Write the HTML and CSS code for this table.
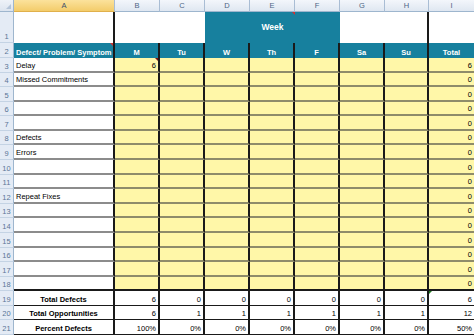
FILE: index.html
```html
<!DOCTYPE html>
<html>
<head>
<meta charset="utf-8">
<link rel="stylesheet" href="styles.css">
</head>
<body>
<div class="sheet">
  <div class="corner"><span class="tri"></span></div>
  <div class="ch sel">A</div><div class="ch">B</div><div class="ch">C</div><div class="ch">D</div><div class="ch">E</div><div class="ch">F</div><div class="ch">G</div><div class="ch">H</div><div class="ch last">I</div>

  <div class="rh">1</div>
  <div class="c w1 bk"></div>
  <div class="c w1 span2"></div>
  <div class="c week span3">Week<span class="mark red mk-e"></span></div>
  <div class="c w1 span2 bk"></div>
  <div class="c w1 end"></div>

  <div class="rh">2</div>
  <div class="c hd left">Defect/ Problem/ Symptom<span class="mark red mk-tr"></span></div>
  <div class="c hd">M</div><div class="c hd">Tu</div><div class="c hd">W</div><div class="c hd">Th</div><div class="c hd">F</div><div class="c hd">Sa</div><div class="c hd">Su</div><div class="c hd end">Total</div>

  <div class="rh">3</div><div class="c lab">Delay</div><div class="c y num">6<span class="mark dred mk-tr"></span></div><div class="c y"></div><div class="c y"></div><div class="c y"></div><div class="c y"></div><div class="c y"></div><div class="c y"></div><div class="c y num end">6</div>
  <div class="rh">4</div><div class="c lab">Missed Commitments</div><div class="c y"></div><div class="c y"></div><div class="c y"></div><div class="c y"></div><div class="c y"></div><div class="c y"></div><div class="c y"></div><div class="c y num end">0</div>
  <div class="rh">5</div><div class="c lab"></div><div class="c y"></div><div class="c y"></div><div class="c y"></div><div class="c y"></div><div class="c y"></div><div class="c y"></div><div class="c y"></div><div class="c y num end">0</div>
  <div class="rh">6</div><div class="c lab"></div><div class="c y"></div><div class="c y"></div><div class="c y"></div><div class="c y"></div><div class="c y"></div><div class="c y"></div><div class="c y"></div><div class="c y num end">0</div>
  <div class="rh">7</div><div class="c lab"></div><div class="c y"></div><div class="c y"></div><div class="c y"></div><div class="c y"></div><div class="c y"></div><div class="c y"></div><div class="c y"></div><div class="c y num end">0</div>
  <div class="rh">8</div><div class="c lab">Defects</div><div class="c y"></div><div class="c y"></div><div class="c y"></div><div class="c y"></div><div class="c y"></div><div class="c y"></div><div class="c y"></div><div class="c y num end">0</div>
  <div class="rh">9</div><div class="c lab">Errors</div><div class="c y"></div><div class="c y"></div><div class="c y"></div><div class="c y"></div><div class="c y"></div><div class="c y"></div><div class="c y"></div><div class="c y num end">0</div>
  <div class="rh">10</div><div class="c lab"></div><div class="c y"></div><div class="c y"></div><div class="c y"></div><div class="c y"></div><div class="c y"></div><div class="c y"></div><div class="c y"></div><div class="c y num end">0</div>
  <div class="rh">11</div><div class="c lab"></div><div class="c y"></div><div class="c y"></div><div class="c y"></div><div class="c y"></div><div class="c y"></div><div class="c y"></div><div class="c y"></div><div class="c y num end">0</div>
  <div class="rh">12</div><div class="c lab">Repeat Fixes</div><div class="c y"></div><div class="c y"></div><div class="c y"></div><div class="c y"></div><div class="c y"></div><div class="c y"></div><div class="c y"></div><div class="c y num end">0</div>
  <div class="rh">13</div><div class="c lab"></div><div class="c y"></div><div class="c y"></div><div class="c y"></div><div class="c y"></div><div class="c y"></div><div class="c y"></div><div class="c y"></div><div class="c y num end">0</div>
  <div class="rh">14</div><div class="c lab"></div><div class="c y"></div><div class="c y"></div><div class="c y"></div><div class="c y"></div><div class="c y"></div><div class="c y"></div><div class="c y"></div><div class="c y num end">0</div>
  <div class="rh">15</div><div class="c lab"></div><div class="c y"></div><div class="c y"></div><div class="c y"></div><div class="c y"></div><div class="c y"></div><div class="c y"></div><div class="c y"></div><div class="c y num end">0</div>
  <div class="rh">16</div><div class="c lab"></div><div class="c y"></div><div class="c y"></div><div class="c y"></div><div class="c y"></div><div class="c y"></div><div class="c y"></div><div class="c y"></div><div class="c y num end">0</div>
  <div class="rh">17</div><div class="c lab"></div><div class="c y"></div><div class="c y"></div><div class="c y"></div><div class="c y"></div><div class="c y"></div><div class="c y"></div><div class="c y"></div><div class="c y num end">0</div>
  <div class="rh">18</div><div class="c lab lastlab"></div><div class="c y lasty"></div><div class="c y lasty"></div><div class="c y lasty"></div><div class="c y lasty"></div><div class="c y lasty"></div><div class="c y lasty"></div><div class="c y lasty"></div><div class="c y num end lasty">0</div>

  <div class="rh">19</div><div class="c ft">Total Defects</div><div class="c f num">6</div><div class="c f num">0</div><div class="c f num">0</div><div class="c f num">0</div><div class="c f num">0</div><div class="c f num">0</div><div class="c f num">0</div><div class="c f num end">6<span class="mark green mk-tl"></span></div>
  <div class="rh">20</div><div class="c ft">Total Opportunities</div><div class="c f num">6</div><div class="c f num">1</div><div class="c f num">1</div><div class="c f num">1</div><div class="c f num">1</div><div class="c f num">1</div><div class="c f num">1</div><div class="c f num end">12</div>
  <div class="rh">21</div><div class="c ft">Percent Defects</div><div class="c f num">100%</div><div class="c f num">0%</div><div class="c f num">0%</div><div class="c f num">0%</div><div class="c f num">0%</div><div class="c f num">0%</div><div class="c f num">0%</div><div class="c f num end">50%</div>
</div>
</body>
</html>
```

FILE: styles.css
```css
html, body {
  margin: 0;
  padding: 0;
  background: #ffffff;
}

.sheet {
  display: grid;
  grid-template-columns: 14px 101px 45px 45px 45px 45px 45px 45px 44px 45px;
  grid-template-rows: 12px 31px 15px repeat(19, 1fr);
  width: 474px;
  height: 335px;
  overflow: hidden;
  font-family: "Liberation Sans", Arial, sans-serif;
  font-size: 7.5px;
  color: #000;
}

.sheet > div {
  box-sizing: border-box;
  min-width: 0;
  overflow: hidden;
  white-space: nowrap;
  position: relative;
}

.corner {
  background: linear-gradient(#eef2f8, #dce4ef);
  border-right: 1px solid #9eb6ce;
  border-bottom: 1px solid #9eb6ce;
}

.tri {
  position: absolute;
  right: 2px;
  bottom: 2px;
  width: 0;
  height: 0;
  border-left: 5px solid transparent;
  border-bottom: 5px solid #b4c4d8;
}

.ch {
  background: linear-gradient(#f3f6fb, #dfe7f1);
  border-right: 1px solid #a9bdd4;
  border-bottom: 1px solid #9eb6ce;
  color: #4d6685;
  font-size: 7.5px;
  display: flex;
  align-items: center;
  justify-content: center;
}

.ch.sel {
  background: linear-gradient(#fbe29c, #f3cc6a);
  color: #3c4f6a;
  border-bottom-color: #e0b04b;
}

.ch.last {
  border-right: 0;
}

.rh {
  background: #e4ebf5;
  border-right: 1px solid #9eb6ce;
  border-bottom: 1px solid #c4d3e4;
  color: #5a7596;
  font-size: 7.5px;
  display: flex;
  align-items: flex-end;
  justify-content: center;
  padding-bottom: 1px;
}

.c {
  display: flex;
  align-items: flex-end;
  padding: 0 2px 1px 2px;
}

.span2 { grid-column: span 2; }
.span3 { grid-column: span 3; }

.w1 {
  background: #ffffff;
}

.bk {
  border-right: 2px solid #1a1a1a;
}

.week {
  background: #17809e;
  color: #ffffff;
  font-weight: bold;
  font-size: 8.5px;
  align-items: center;
  justify-content: center;
}

.hd {
  background: #17809e;
  color: #ffffff;
  font-weight: bold;
  justify-content: center;
  border-right: 2px solid #1a1a1a;
}

.hd.left {
  justify-content: flex-start;
}

.end {
  border-right: 0 !important;
}

.lab {
  background: #ffffff;
  border-right: 2px solid #1a1a1a;
  border-bottom: 2px solid #8c8c8c;
}

.y {
  background: #fff7a8;
  border-right: 2px solid #1a1a1a;
  border-bottom: 2px solid #8e8c6a;
}

.lasty, .lastlab {
  border-bottom: 2px solid #1a1a1a;
}

.num {
  justify-content: flex-end;
}

.ft {
  background: #ffffff;
  font-weight: bold;
  justify-content: center;
  border-right: 2px solid #1a1a1a;
  border-bottom: 1px solid #1a1a1a;
}

.f {
  background: #ffffff;
  border-right: 2px solid #1a1a1a;
  border-bottom: 1px solid #1a1a1a;
}

.mark {
  position: absolute;
  width: 0;
  height: 0;
}

.mk-tr {
  top: 0;
  right: 0;
  border-left: 3px solid transparent;
  border-top: 3px solid currentColor;
}

.mk-tl {
  top: 0;
  left: 0;
  border-right: 3px solid transparent;
  border-top: 3px solid currentColor;
}

.mk-e {
  top: 0;
  right: 45px;
  border-left: 3px solid transparent;
  border-top: 3px solid currentColor;
}

.red { color: #d03030; }
.dred { color: #7a1010; }
.green { color: #207a20; }
```
